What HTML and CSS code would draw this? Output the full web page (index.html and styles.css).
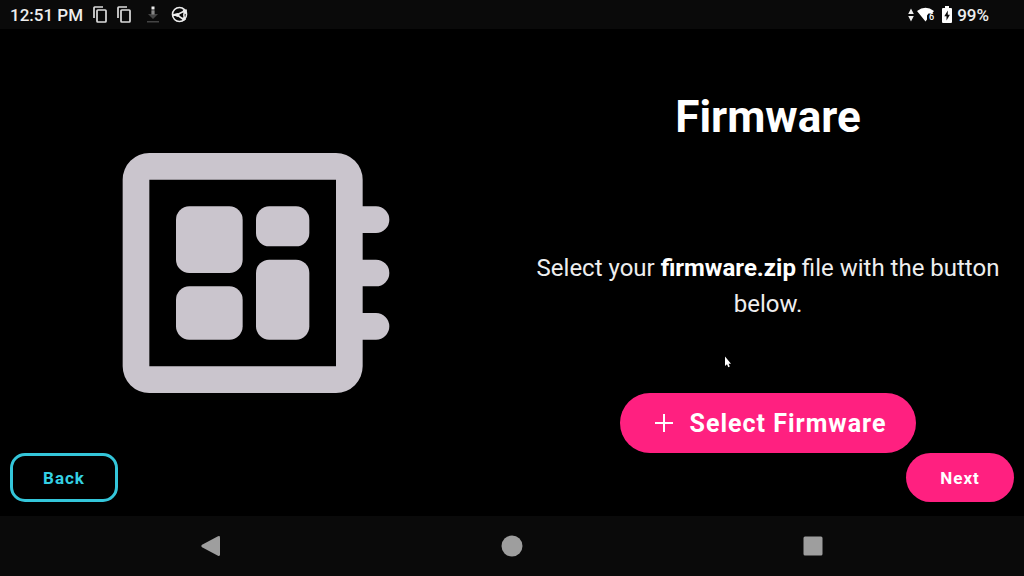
FILE: index.html
```html
<!DOCTYPE html>
<html lang="en">
<head>
    <meta charset="UTF-8">
    <meta name="viewport" content="width=device-width, initial-scale=1.0">
    <title>Firmware</title>
    <link rel="stylesheet" href="styles.css">
</head>
<body>
    <header class="status-bar">
        <div class="status-left">
            <span class="clock">12:51 PM</span>
            <svg class="icon-copy" viewBox="0 0 14 17" aria-hidden="true">
                <path d="M1 12V1.8Q1 1 1.8 1H10M4.5 4H12.2Q13 4 13 4.8V15.2Q13 16 12.2 16H4.8Q4 16 4 15.2V4.8Q4 4 4.8 4"/>
            </svg>
            <svg class="icon-copy" viewBox="0 0 14 17" aria-hidden="true">
                <path d="M1 12V1.8Q1 1 1.8 1H10M4.5 4H12.2Q13 4 13 4.8V15.2Q13 16 12.2 16H4.8Q4 16 4 15.2V4.8Q4 4 4.8 4"/>
            </svg>
            <svg class="icon-download" viewBox="0 0 12 17" aria-hidden="true">
                <path fill="#444" d="M4.500 4h3v4H11L6 13 1 8h3.500zM0 15h12v1.500H0z"/>
                <path fill="#eee" d="M4.500 0.500h3v3h-3z"/>
                <path fill="#888" d="M4.500 4.500h3v4h-3z"/>
            </svg>
            <svg class="icon-app" viewBox="0 0 17 17" aria-hidden="true">
                <circle cx="8.500" cy="8.500" r="7"/>
                <path d="M1.500 9.500L6 8.800 14.500 4.500M6 8.800L12.500 13.500M13.500 5.500Q12 9.500 13.500 13"/>
                <path class="solid" d="M1 8.500L6.500 7l2.500 2-2.500 2zM11.500 3.500l4.500 0-.5 5-2.500-1.500zM10.500 12l3-1 1.500 2.500-2.500 1.500z"/>
            </svg>
        </div>
        <div class="status-right">
            <svg class="icon-traffic" viewBox="0 0 6 14" aria-hidden="true">
                <path d="M3 0.500L5.800 6H0.200zM3 13.500L5.800 8H0.200z"/>
            </svg>
            <svg class="icon-wifi" viewBox="0 0 18 15" aria-hidden="true">
                <path d="M0 4Q8.500-2.500 17 4L15 6.500H11.500L10 8.500V12.500L8.500 14.500z"/>
                <text x="12" y="13">6</text>
            </svg>
            <svg class="icon-battery" viewBox="0 0 10 17" aria-hidden="true">
                <path d="M3 0h4v2h2q1 0 1 1v13q0 1-1 1H1q-1 0-1-1V3q0-1 1-1h2z"/>
                <path fill="#0a0a0a" d="M5.800 4.500L2.300 10.300h2.200v4.200L7.900 8.700H5.800z"/>
            </svg>
            <span class="battery-level">99%</span>
        </div>
    </header>

    <main class="page">
        <div class="art">
            <svg class="board" viewBox="0 0 24 24" aria-hidden="true">
                <path fill-rule="evenodd" d="M4 3h14a2 2 0 0 1 2 2v2h1a1 1 0 0 1 0 2h-1v2h1a1 1 0 0 1 0 2h-1v2h1a1 1 0 0 1 0 2h-1v2a2 2 0 0 1-2 2H4a2 2 0 0 1-2-2V5a2 2 0 0 1 2-2zM4 5v14h14V5z"/>
                <rect x="6" y="7" width="5" height="5" rx="1"/>
                <rect x="6" y="13" width="5" height="4" rx="1"/>
                <rect x="12" y="7" width="4" height="3" rx="1"/>
                <rect x="12" y="11" width="4" height="6" rx="1"/>
            </svg>
        </div>

        <section class="content">
            <h1>Firmware</h1>
            <p>Select your <strong>firmware.zip</strong> file with the button below.</p>
            <button type="button" class="btn btn-select">
                <svg class="icon-plus" viewBox="0 0 18 18" aria-hidden="true">
                    <path d="M9 0v18M0 9h18"/>
                </svg>
                Select Firmware
            </button>
        </section>

        <div class="actions">
            <button type="button" class="btn btn-back">Back</button>
            <button type="button" class="btn btn-next">Next</button>
        </div>
    </main>

    <nav class="nav-bar">
        <button type="button" aria-label="Back">
            <svg viewBox="0 0 24 24"><path d="M21 3.500v17q0 2-2 1.200L3 13.200q-1.600-1.200 0-2.400L19 2.300q2-.8 2 1.200z"/></svg>
        </button>
        <button type="button" aria-label="Home">
            <svg viewBox="0 0 24 24"><circle cx="12" cy="12" r="10.500"/></svg>
        </button>
        <button type="button" aria-label="Recent apps">
            <svg viewBox="0 0 24 24"><rect x="2.500" y="2.500" width="19" height="19" rx="1.500"/></svg>
        </button>
    </nav>

    <svg class="cursor" viewBox="0 0 8 12" aria-hidden="true">
        <path d="M1 0.500V10L3 8.300 4.300 11.200 5.800 10.500 4.600 7.800H7z"/>
    </svg>
</body>
</html>
```

FILE: styles.css
```css
* {
    box-sizing: border-box;
}
body {
    font-family: Roboto, "Noto Sans", sans-serif;
    background: #000;
    color: #fff;
    margin: 0;
    min-height: 100vh;
    display: flex;
    flex-direction: column;
}
button {
    font-family: inherit;
    border: none;
    padding: 0;
    cursor: pointer;
}

/* Status bar */
.status-bar {
    display: flex;
    justify-content: space-between;
    align-items: center;
    height: 29px;
    padding: 0 35px 0 10px;
    background: #0a0a0a;
    color: #eee;
    font-size: 17px;
    font-weight: 500;
}
.status-left,
.status-right {
    display: flex;
    align-items: center;
}
.status-left {
    gap: 10px;
}
.status-right {
    gap: 5px;
}
.icon-copy {
    width: 14px;
    height: 17px;
    fill: none;
    stroke: #ddd;
    stroke-width: 1.7;
}
.icon-download {
    width: 12px;
    height: 17px;
    margin-left: 6px;
}
.icon-app {
    width: 17px;
    height: 17px;
    margin-left: 2px;
    fill: none;
    stroke: #eee;
    stroke-width: 1.6;
}
.icon-app .solid {
    fill: #eee;
    stroke: none;
}
.icon-traffic {
    width: 6px;
    height: 14px;
    fill: #eee;
}
.icon-wifi {
    width: 18px;
    height: 15px;
    margin-left: -2px;
    fill: #fff;
    font-size: 9px;
    overflow: visible;
}
.icon-battery {
    width: 10px;
    height: 17px;
    margin-left: 2px;
    fill: #fff;
}

/* Page */
.page {
    flex: 1;
    display: grid;
    grid-template-columns: 1fr 1fr;
    grid-template-rows: 1fr auto;
}
.art {
    grid-column: 1;
    grid-row: 1 / 3;
    display: flex;
    align-items: center;
    justify-content: center;
}
.board {
    width: 320px;
    height: 320px;
    fill: #cac5cd;
}
.content {
    grid-column: 2;
    grid-row: 1;
    display: flex;
    flex-direction: column;
    align-items: center;
    justify-content: flex-end;
    padding: 0 16px;
    text-align: center;
}
h1 {
    margin: 0 0 107px;
    font-size: 44px;
    line-height: 52px;
    font-weight: 700;
}
p {
    margin: 0 0 71px;
    font-size: 24px;
    line-height: 36px;
    color: #eee;
}
strong {
    color: #fff;
}
.actions {
    grid-column: 1 / 3;
    grid-row: 2;
    display: flex;
    justify-content: space-between;
    padding: 0 10px 14px;
}

/* Buttons */
.btn {
    display: flex;
    align-items: center;
    justify-content: center;
    font-weight: 700;
    letter-spacing: 1px;
    color: #fff;
    background: #ff2080;
}
.btn-select {
    height: 60px;
    padding: 0 29px 0 35px;
    gap: 16px;
    border-radius: 30px;
    font-size: 25px;
}
.icon-plus {
    width: 18px;
    height: 18px;
    fill: none;
    stroke: #fff;
    stroke-width: 2;
}
.btn-back,
.btn-next {
    width: 108px;
    height: 49px;
    border-radius: 25px;
    font-size: 17px;
}
.btn-back {
    border: 3px solid #34c6da;
    border-radius: 15px;
    color: #34d0e4;
    background: transparent;
}

/* Navigation bar */
.nav-bar {
    display: flex;
    height: 60px;
    padding: 0 60px;
    background: #0a0a0a;
}
.nav-bar button {
    flex: 1;
    display: flex;
    align-items: center;
    justify-content: center;
    background: transparent;
}
.nav-bar svg {
    width: 24px;
    height: 24px;
    fill: #9e9e9e;
}

/* Mouse pointer */
.cursor {
    position: absolute;
    left: 724px;
    top: 356px;
    width: 8px;
    height: 12px;
    fill: #fff;
    pointer-events: none;
}
```
